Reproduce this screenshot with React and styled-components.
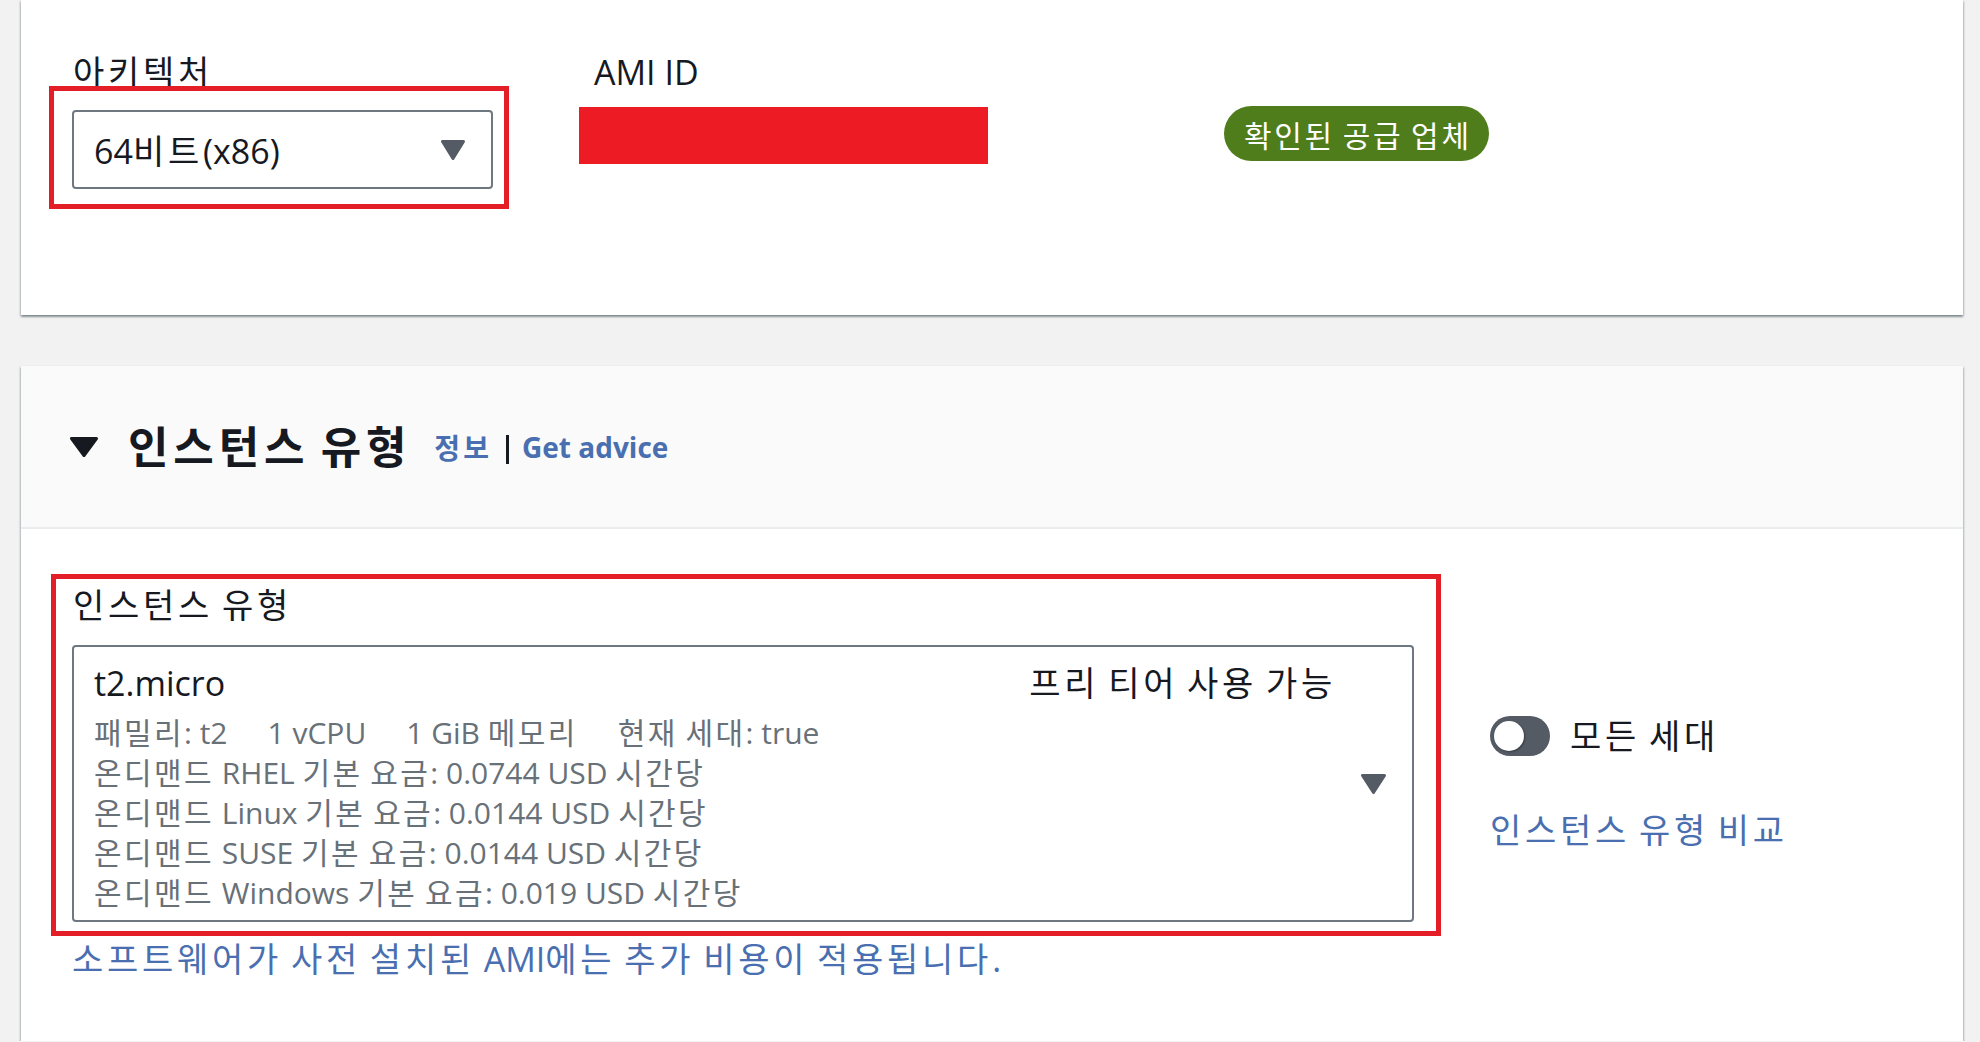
import React from "react";
import styled, { createGlobalStyle } from "styled-components";

const GlobalStyle = createGlobalStyle`
  html, body {
    margin: 0;
    padding: 0;
    background: #f2f2f2;
  }
  body {
    font-family: "Open Sans", "Noto Sans CJK KR", sans-serif;
    color: #16191f;
  }
`;

const Hangul = styled.span`
  letter-spacing: var(--hangul-track, 0.11em);
`;

const ko = (text) => (
  <span>
    {text
      .split(/([\uAC00-\uD7A3]+)/)
      .filter(Boolean)
      .map((part, i) =>
        /[\uAC00-\uD7A3]/.test(part) ? <Hangul key={i}>{part}</Hangul> : part
      )}
  </span>
);

const Page = styled.div`
  display: flex;
  flex-direction: column;
  gap: 51px;
  padding: 0 17px 0 21px;
`;

const Card = styled.section`
  background: #ffffff;
  box-shadow: 0 2px 2px rgba(0, 28, 36, 0.35), 1px 1px 2px rgba(0, 28, 36, 0.15),
    -1px 1px 2px rgba(0, 28, 36, 0.15);
`;

const TopRow = styled.div`
  height: 315px;
  box-sizing: border-box;
  display: flex;
  align-items: flex-start;
  padding: 52px 0 0 28px;
`;

const Column = styled.div`
  display: flex;
  flex-direction: column;
  width: ${(p) => p.$width}px;
  margin-left: ${(p) => p.$offset || 0}px;
  padding-top: ${(p) => p.$top || 0}px;
`;

const FieldLabel = styled.div`
  font-size: 34px;
  line-height: 40px;
  padding-left: ${(p) => p.$indent || 0}px;
  white-space: nowrap;
`;

const RedFrame = styled.div`
  border: 5px solid #e31e26;
  padding: ${(p) => p.$pad};
  margin-top: ${(p) => p.$top || 0}px;
`;

const Select = styled.div`
  box-sizing: border-box;
  height: ${(p) => p.$height}px;
  margin-top: ${(p) => p.$top || 0}px;
  border: 2px solid #6f7780;
  border-radius: 4px;
  display: flex;
  align-items: center;
  padding: 0 26px 0 20px;
  font-size: 34px;
  background: #fff;
`;

const SelectValue = styled.span`
  flex: 1;
  line-height: 40px;
  padding-top: 3px;
`;

const Caret = styled.svg`
  flex: none;
  margin-left: ${(p) => p.$gap || 0}px;
`;

const Redacted = styled.div`
  height: 57px;
  margin-top: 15px;
  background: #ed1c24;
`;

const Badge = styled.span`
  align-self: flex-start;
  display: inline-flex;
  align-items: center;
  height: 55px;
  padding: 0 17px 0 20px;
  border-radius: 28px;
  background: #507d1c;
  color: #ffffff;
  font-size: 30px;
  white-space: nowrap;
  --hangul-track: 0.09em;
`;

const Header = styled.header`
  height: 161px;
  display: flex;
  align-items: center;
  padding-left: 49px;
  background: #fafafa;
  border-bottom: 2px solid #eaeded;
`;

const Title = styled.h2`
  margin: 0 23px 0 30px;
  font-size: 44px;
  font-weight: 700;
  line-height: 52px;
`;

const HeaderLink = styled.a`
  font-size: 28px;
  font-weight: 700;
  color: #4a6fb0;
  text-decoration: none;
`;

const Divider = styled.span`
  width: 3px;
  height: 29px;
  margin: 6px 13px 0 14px;
  background: #16191f;
`;

const Body = styled.div`
  display: flex;
  align-items: flex-start;
  padding: 45px 0 62px 30px;
`;

const InstanceSelect = styled(Select)`
  align-items: stretch;
`;

const Info = styled.div`
  flex: 1;
  padding-top: 16px;
`;

const InstanceName = styled.div`
  font-size: 34px;
  line-height: 40px;
  margin-bottom: 10px;
`;

const MetaLine = styled.div`
  display: flex;
  gap: ${(p) => p.$gap || 0}px;
  font-size: 30px;
  line-height: 40px;
  color: #687078;
  white-space: nowrap;
  --hangul-track: 0.08em;
`;

const Tag = styled.span`
  padding-top: 16px;
  line-height: 40px;
  white-space: nowrap;
`;

const CenteredCaret = styled(Caret)`
  align-self: center;
`;

const TextLink = styled.a`
  display: block;
  font-size: 34px;
  line-height: 40px;
  color: #4a6fb0;
  text-decoration: none;
  white-space: nowrap;
  padding-left: ${(p) => p.$indent || 0}px;
  margin-top: ${(p) => p.$top || 0}px;
`;

const ToggleRow = styled.div`
  display: flex;
  align-items: center;
  gap: 20px;
  font-size: 34px;
  line-height: 40px;
`;

const Toggle = styled.span`
  position: relative;
  width: 60px;
  height: 40px;
  border-radius: 20px;
  background: #545b64;
  flex: none;

  &::after {
    content: "";
    position: absolute;
    left: 4px;
    top: 5px;
    width: 30px;
    height: 30px;
    border-radius: 50%;
    background: #ffffff;
    box-shadow: 1px 1px 2px rgba(0, 0, 0, 0.35);
  }
`;

const DownTriangle = ({ w, h, color, gap, centered }) => {
  const Comp = centered ? CenteredCaret : Caret;
  return (
    <Comp $gap={gap} width={w} height={h} viewBox={`0 0 ${w} ${h}`}>
      <polygon
        points={`1.5,1.5 ${w - 1.5},1.5 ${w / 2},${h - 1.5}`}
        fill={color}
        stroke={color}
        strokeWidth="3"
        strokeLinejoin="round"
      />
    </Comp>
  );
};

const meta = ["패밀리: t2", "1 vCPU", "1 GiB 메모리", "현재 세대: true"];

const prices = [
  ["RHEL", "0.0744"],
  ["Linux", "0.0144"],
  ["SUSE", "0.0144"],
  ["Windows", "0.019"],
];

export default function App() {
  return (
    <>
      <GlobalStyle />
      <Page>
        <Card>
          <TopRow>
            <Column $width={460}>
              <FieldLabel $indent={24}>{ko("아키텍처")}</FieldLabel>
              <RedFrame $pad="19px 11px 15px 18px" $top={-6}>
                <Select $height={79}>
                  <SelectValue>{ko("64비트(x86)")}</SelectValue>
                  <DownTriangle w={24} h={20} color="#545b64" />
                </Select>
              </RedFrame>
            </Column>
            <Column $width={409} $offset={70}>
              <FieldLabel $indent={15}>AMI ID</FieldLabel>
              <Redacted />
            </Column>
            <Column $offset={236} $top={54}>
              <Badge>{ko("확인된 공급 업체")}</Badge>
            </Column>
          </TopRow>
        </Card>

        <Card>
          <Header>
            <DownTriangle w={28} h={20} color="#16191f" />
            <Title>{ko("인스턴스 유형")}</Title>
            <HeaderLink>{ko("정보")}</HeaderLink>
            <Divider />
            <HeaderLink>Get advice</HeaderLink>
          </Header>
          <Body>
            <Column $width={1390}>
              <RedFrame $pad="6px 22px 9px 16px">
                <FieldLabel $indent={1}>{ko("인스턴스 유형")}</FieldLabel>
                <InstanceSelect $height={277} $top={20}>
                  <Info>
                    <InstanceName>t2.micro</InstanceName>
                    <MetaLine $gap={40}>
                      {meta.map((item) => (
                        <React.Fragment key={item}>{ko(item)}</React.Fragment>
                      ))}
                    </MetaLine>
                    {prices.map(([os, price]) => (
                      <MetaLine key={os}>
                        {ko(`온디맨드 ${os} 기본 요금: ${price} USD 시간당`)}
                      </MetaLine>
                    ))}
                  </Info>
                  <Tag>{ko("프리 티어 사용 가능")}</Tag>
                  <DownTriangle w={25} h={20} color="#545b64" gap={25} centered />
                </InstanceSelect>
              </RedFrame>
              <TextLink $indent={21} $top={3}>
                {ko("소프트웨어가 사전 설치된 AMI에는 추가 비용이 적용됩니다.")}
              </TextLink>
            </Column>
            <Column $offset={49} $top={142}>
              <ToggleRow>
                <Toggle />
                {ko("모든 세대")}
              </ToggleRow>
              <TextLink $top={54}>{ko("인스턴스 유형 비교")}</TextLink>
            </Column>
          </Body>
        </Card>
      </Page>
    </>
  );
}
